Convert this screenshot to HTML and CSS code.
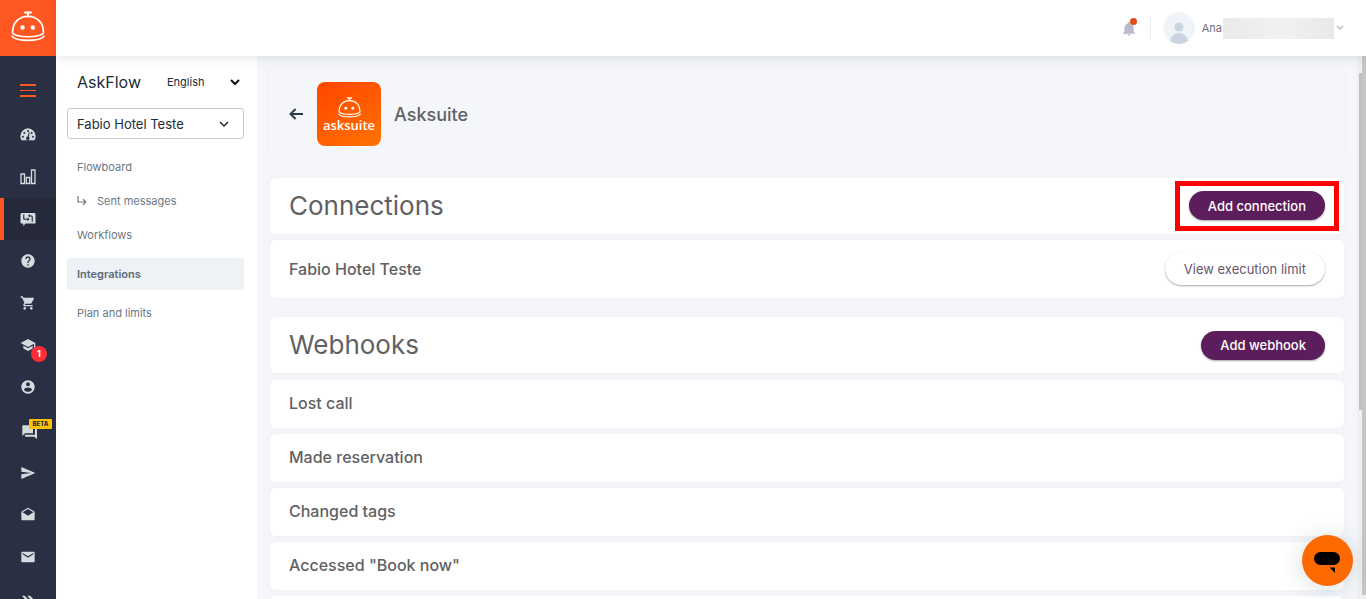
FILE: index.html
```html
<!DOCTYPE html>
<html lang="en">
<head>
<meta charset="utf-8">
<title>AskFlow</title>
<link rel="stylesheet" href="styles.css">
</head>
<body>
<svg class="defs" aria-hidden="true">
  <symbol id="bell-bot" viewBox="0 0 34 31">
    <g fill="none" stroke="#fff" stroke-width="1.7" stroke-linecap="round" stroke-linejoin="round">
      <path stroke-width="2" d="M14 1.500h6M17 1.500v3.500"/>
      <path d="M1.500 22C1.500 11.500 8 5.300 17 5.300S32.500 11.500 32.500 22C28 27 6 27 1.500 22z"/>
      <path d="M1 25.200c5 5.500 27 5.500 32 0"/>
    </g>
    <circle cx="11.500" cy="16.500" r="2.200" fill="#fff"/><circle cx="21.800" cy="16.500" r="2.200" fill="#fff"/>
  </symbol>
</svg>
<div class="app">
  <nav class="rail" aria-label="Main">
    <a class="brand" href="#" aria-label="Home"><svg width="34" height="31"><use href="#bell-bot"/></svg></a>
    <button class="burger" aria-label="Menu"><span></span><span></span><span></span></button>
    <a class="rail-item" href="#" aria-label="Dashboard"><svg width="16" height="16" viewBox="0 0 24 24"><path fill-rule="evenodd" d="M12 2A12 12 0 0 0 .500 14c0 2.200.600 4.200 1.600 6h19.800c1-1.800 1.600-3.800 1.600-6A12 12 0 0 0 12 2zm0 2.500a1.500 1.500 0 1 1 0 3 1.500 1.500 0 0 1 0-3zM4.500 13a1.500 1.500 0 1 1 0 3 1.500 1.500 0 0 1 0-3zm2-5.500a1.500 1.500 0 1 1 0 3 1.500 1.500 0 0 1 0-3zm13 5.500a1.500 1.500 0 1 1 0 3 1.500 1.500 0 0 1 0-3zM17.500 7.500a1.500 1.500 0 1 1 0 3 1.500 1.500 0 0 1 0-3zM13.200 8l1.300.400-1 6.600a2.600 2.600 0 1 1-1.800-.600z"/></svg></a>
    <a class="rail-item" href="#" aria-label="Reports"><svg width="16" height="16" viewBox="0 0 16 16"><path d="M1 5h3.500v9.500H1zM6.300 8.500h3.400v6H6.300zM11.500 1H15v13.500h-3.500z" fill="none" stroke="#d3dcdf" stroke-width="1.300"/></svg></a>
    <a class="rail-item active" href="#" aria-label="AskFlow"><svg width="16" height="16" viewBox="0 0 16 16"><path fill-rule="evenodd" d="M1.500 2h13l1 1v9.500h-10L3.500 15 3 12.500H1L.500 12V3zM3.200 3.500v3.800c0 1 .600 1.500 1.500 1.500h2.800v1.500l2-2-2-2v1.500H5c-.500 0-.700-.200-.700-.700V3.500zM8 4.800l2 1.800V5.500h1c.500 0 .700.300.700.700v4.500h1.100V6c0-1-.600-1.600-1.500-1.600H10V3z"/></svg></a>
    <a class="rail-item" href="#" aria-label="Help"><svg width="16" height="16" viewBox="0 0 24 24"><path d="M12 2C6.480 2 2 6.480 2 12s4.480 10 10 10 10-4.480 10-10S17.520 2 12 2zm1 17h-2v-2h2v2zm2.070-7.750l-.9.920C13.450 12.900 13 13.500 13 15h-2v-.5c0-1.100.450-2.100 1.170-2.830l1.240-1.260c.370-.360.590-.860.590-1.410 0-1.100-.9-2-2-2s-2 .9-2 2H8c0-2.210 1.790-4 4-4s4 1.790 4 4c0 .880-.360 1.680-.930 2.250z"/></svg></a>
    <a class="rail-item" href="#" aria-label="Store"><svg width="16" height="16" viewBox="0 0 24 24"><path d="M7 18c-1.100 0-1.990.9-1.990 2S5.900 22 7 22s2-.9 2-2-.9-2-2-2zM1 2v2h2l3.600 7.590-1.350 2.450c-.160.280-.250.610-.250.960 0 1.100.9 2 2 2h12v-2H7.420c-.140 0-.250-.110-.250-.250l.030-.120.900-1.630h7.450c.750 0 1.410-.410 1.750-1.030l3.580-6.490A1 1 0 0 0 20 4H5.210l-.940-2H1zm16 16c-1.100 0-1.990.9-1.990 2s.890 2 1.990 2 2-.9 2-2-.9-2-2-2z"/></svg></a>
    <a class="rail-item" href="#" aria-label="Academy, 1 new"><svg width="16" height="16" viewBox="0 0 24 24"><path d="M5 13.180v4L12 21l7-3.820v-4L12 17l-7-3.820zM12 3L1 9l11 6 9-4.910V17h2V9L12 3z"/></svg><span class="count">1</span></a>
    <a class="rail-item" href="#" aria-label="Account"><svg width="16" height="16" viewBox="0 0 24 24"><path d="M12 2C6.480 2 2 6.480 2 12s4.480 10 10 10 10-4.480 10-10S17.520 2 12 2zm0 3c1.660 0 3 1.340 3 3s-1.340 3-3 3-3-1.340-3-3 1.340-3 3-3zm0 14.200c-2.500 0-4.710-1.280-6-3.220.030-1.990 4-3.080 6-3.080 1.990 0 5.970 1.090 6 3.080-1.290 1.940-3.500 3.220-6 3.220z"/></svg></a>
    <a class="rail-item tall" href="#" aria-label="Chats, beta"><svg width="16" height="16" viewBox="0 0 24 24"><path d="M21 6h2c.550 0 1 .450 1 1v16l-4-4H7c-.550 0-1-.450-1-1v-2h15V6zm-3 7V3c0-.550-.450-1-1-1H3c-.550 0-1 .450-1 1v15l4-4h11c.550 0 1-.450 1-1z"/></svg><span class="beta">BETA</span></a>
    <a class="rail-item" href="#" aria-label="Send"><svg width="16" height="16" viewBox="0 0 24 24"><path d="M2.010 21L23 12 2.010 3 2 10l15 2-15 2z"/></svg></a>
    <a class="rail-item" href="#" aria-label="Read mail"><svg width="16" height="16" viewBox="0 0 24 24"><path d="M21.990 8c0-.720-.370-1.350-.940-1.700L12 1 2.950 6.300C2.380 6.650 2 7.280 2 8v10c0 1.100.9 2 2 2h16c1.100 0 2-.9 2-2l-.010-10zM12 13L3.740 7.840 12 3l8.260 4.840L12 13z"/></svg></a>
    <a class="rail-item" href="#" aria-label="Mail"><svg width="16" height="16" viewBox="0 0 24 24"><path d="M20 4H4c-1.100 0-2 .9-2 2v12c0 1.100.9 2 2 2h16c1.100 0 2-.9 2-2V6c0-1.100-.9-2-2-2zm0 4l-8 5-8-5V6l8 5 8-5v2z"/></svg></a>
    <a class="rail-item" href="#" aria-label="More"><svg width="16" height="16" viewBox="0 0 24 24"><path d="M3 7h4l6 6-6 6H3l5-6zM11 7h4l6 6-6 6h-4l5-6z"/></svg></a>
  </nav>

  <header class="topbar">
    <button class="alerts" aria-label="Notifications"><svg width="16" height="16" viewBox="0 0 24 24"><path fill="#b9bacb" d="M12 22c1.100 0 2-.9 2-2h-4c0 1.100.9 2 2 2zm7-6v-5c0-3.500-1.800-6-5-6.800V3.500a2 2 0 0 0-4 0v.700C6.800 5 5 7.500 5 11v5l-2 2v1h18v-1z"/></svg><span class="dot"></span></button>
    <button class="user">
      <svg class="avatar" width="32" height="32" viewBox="0 0 32 32"><circle cx="16" cy="16" r="16" fill="#f0f4f8"/><circle cx="16" cy="15" r="4.600" fill="#cbd5e2"/><path d="M6.800 29.100C8 24 11.500 21 16 21s8 3 9.200 8.100A16 16 0 0 1 6.800 29.100z" fill="#cbd5e2"/></svg>
      <span>Ana</span><span class="redacted"></span>
      <svg width="8" height="6" viewBox="0 0 8 6"><path d="M1 1l3 3 3-3" fill="none" stroke="#b9bacb" stroke-width="1.400"/></svg>
    </button>
  </header>

  <aside class="panel">
    <div class="panel-head">
      <h1>AskFlow</h1>
      <div class="pick language"><select aria-label="Language"><option>English</option></select><svg width="10" height="8" viewBox="0 0 10 8"><path d="M1 2l4 4 4-4" fill="none" stroke="#111" stroke-width="2"/></svg></div>
    </div>
    <div class="pick hotel"><select aria-label="Hotel"><option>Fabio Hotel Teste</option></select><svg width="10" height="8" viewBox="0 0 10 8"><path d="M1 2l4 4 4-4" fill="none" stroke="#212b36" stroke-width="1.500"/></svg></div>
    <nav class="links" aria-label="AskFlow">
      <a href="#">Flowboard</a>
      <a href="#"><svg width="10" height="10" viewBox="0 0 10 10"><path d="M1 0v6h7.500M6 3.200L8.700 6 6 8.800" fill="none" stroke="#6b7785" stroke-width="1.200"/></svg>Sent messages</a>
      <a href="#">Workflows</a>
      <a class="current" href="#">Integrations</a>
      <a href="#">Plan and limits</a>
    </nav>
  </aside>

  <main class="content">
    <section class="card intro">
      <button class="back" aria-label="Back"><svg width="14" height="12" viewBox="0 0 14 12"><path d="M14 6H1.800M6.600 1L1.500 6l5.100 5" fill="none" stroke="#2d3b4d" stroke-width="2"/></svg></button>
      <div class="logo"><svg width="23" height="21"><use href="#bell-bot"/></svg><span>asksuite</span></div>
      <h3>Asksuite</h3>
    </section>
    <section class="group">
      <div class="card head"><h2>Connections</h2><span class="marked"><button class="btn">Add connection</button></span></div>
      <div class="card row large"><span>Fabio Hotel Teste</span><button class="btn light">View execution limit</button></div>
    </section>
    <section class="group">
      <div class="card head"><h2>Webhooks</h2><button class="btn">Add webhook</button></div>
      <div class="rows">
        <div class="card row">Lost call</div>
        <div class="card row">Made reservation</div>
        <div class="card row">Changed tags</div>
        <div class="card row">Accessed "Book now"</div>
        <div class="card row"></div>
      </div>
    </section>
  </main>
  <div class="scroll inner"><span></span></div>
  <div class="scroll outer"><span></span></div>
  <button class="chat" aria-label="Open chat"><svg width="27" height="22" viewBox="0 0 27 22"><rect x="0" y="0" width="26" height="13" rx="6.500"/><path d="M15.500 15.500h5.500v5.500z"/></svg></button>
</div>
</body>
</html>
```
FILE: styles.css
```css
* { box-sizing: border-box; }
body { margin: 0; font-family: Inter, "Liberation Sans", sans-serif; color: #5f6164; }
h1, h2, h3 { margin: 0; font-weight: 400; }
button, select { font: inherit; color: inherit; border: 0; background: none; padding: 0; }
a { color: inherit; text-decoration: none; }
svg { display: block; flex: none; }
.defs { position: absolute; width: 0; height: 0; }

.app {
  display: grid;
  grid-template: 56px minmax(0, 1fr) / 56px 201px minmax(0, 1fr) 5px 4px;
  height: 100vh;
  overflow: hidden;
  background: #f4f6fa;
}

.rail { grid-row: 1 / 3; background: #2b2f43; overflow: hidden; display: flex; flex-direction: column; }
.brand { flex: none; height: 56px; background: #ff5722; display: flex; align-items: center; justify-content: center; padding-bottom: 4px; }
.burger { flex: none; height: 48px; margin-top: 10px; display: flex; flex-direction: column; align-items: center; justify-content: center; gap: 4px; }
.burger span { width: 16px; height: 2px; background: #ff5722; }
.burger span:nth-child(2) { height: 1px; }
.rail-item { flex: none; height: 42px; display: flex; align-items: center; justify-content: center; position: relative; fill: #d3dcdf; padding-right: 1px; }
.rail-item.tall { height: 44px; padding: 3px 0 0 1px; }
.rail-item.active { background: #252939; border-left: 4px solid #ff5722; padding-right: 5px; }
.count { position: absolute; left: 31px; top: 22px; width: 16px; height: 16px; border-radius: 50%; background: #ff2d37; color: #fff; font-size: 9px; font-weight: 700; line-height: 16px; text-align: center; }
.beta { position: absolute; left: 29px; top: 11px; width: 23px; height: 10px; border-radius: 1px; background: #ffc107; color: #2b2f43; font-size: 6px; font-weight: 800; line-height: 10px; text-align: center; }

.topbar { grid-column: 2 / 6; background: #fff; display: flex; align-items: center; justify-content: flex-end; padding-right: 22px; box-shadow: 0 2px 10px rgba(40, 45, 70, .13); z-index: 1; }
.alerts { position: relative; width: 30px; height: 22px; border-right: 1px solid #ebecf5; }
.alerts svg { margin-top: 2px; }
.dot { position: absolute; left: 9px; top: 1px; width: 7px; height: 7px; border-radius: 50%; background: #e64a19; }
.user { display: flex; align-items: center; margin-left: 12px; font-size: 11px; color: #6c7079; }
.avatar { margin-right: 7px; }
.redacted { width: 111px; height: 21px; margin: 0 2px 0 1px; background: linear-gradient(90deg, #eaeaea, #f1f1f1 50%, #e9e9e9); }

.panel { grid-row: 2; grid-column: 2; background: #fff; padding: 11px 13px 0 11px; }
.panel-head { display: flex; align-items: center; justify-content: space-between; height: 30px; padding: 0 4px 0 10px; }
h1 { font-size: 16px; color: #212b36; }
.pick { display: flex; align-items: center; color: #212b36; position: relative; }
.pick select { appearance: none; width: 100%; outline: 0; }
.pick svg { position: absolute; right: 0; pointer-events: none; }
.language { width: 73px; font-size: 11px; }
.hotel { height: 31px; margin-top: 11px; border: 1px solid #c5cad5; border-radius: 3px; font-size: 13px; }
.hotel select { height: 29px; padding-left: 9px; }
.hotel svg { right: 14px; }
.links { display: flex; flex-direction: column; margin-top: 12px; gap: 2px; font-size: 11px; color: #6b7785; }
.links a { height: 32px; display: flex; align-items: center; gap: 10px; padding: 0 10px; border-radius: 3px; }
.links .current { background: #eef1f6; font-weight: 600; margin: 5px 0; color: #5d6979; }

.content { grid-row: 2; grid-column: 3; padding: 13px 13px 0; overflow: hidden; display: flex; flex-direction: column; gap: 19px; }
.card { flex: none; border-radius: 6px; background: #fff; box-shadow: 0 0 6px rgba(60, 70, 110, .03); display: flex; align-items: center; justify-content: space-between; padding: 0 19px; }
.intro { height: 90px; background: #f5f6fa; justify-content: flex-start; }
.back { margin-right: 14px; }
.logo { width: 64px; height: 64px; margin-right: 13px; border-radius: 8px; background: linear-gradient(150deg, #ff4500, #ff7300); color: #fff; display: flex; flex-direction: column; align-items: center; justify-content: center; font: 600 13px/14px "Open Sans", sans-serif; }
h3 { font-size: 18px; font-weight: 500; }
.group { display: flex; flex-direction: column; gap: 6px; }
.head { height: 56px; }
h2 { font-size: 26px; line-height: 32px; }
.rows { display: flex; flex-direction: column; gap: 6px; margin-top: 1px; }
.row { height: 48px; padding-bottom: 3px; font-size: 16px; font-weight: 500; }
.row.large { height: 58px; padding-bottom: 1px; }
.marked { display: flex; margin: 0 -9px; padding: 5px 9px 6px; outline: 5px solid #f00; }
.btn { height: 29px; padding: 0 19px; border-radius: 17px; background: #5b1d5b; color: #fff; font-size: 13px; font-weight: 500; box-shadow: 0 1px 2px rgba(0, 0, 0, .35); }
.btn.light { height: 33px; background: #fff; color: #6a5570; font-weight: 400; }

.scroll { grid-row: 2; display: flex; flex-direction: column; background: #f0f0f0; }
.scroll span { background: #c1c1c1; }
.inner { grid-column: 4; padding: 17px 0 0 2px; }
.inner span { height: 64%; min-height: 40px; }
.outer { grid-column: 5; padding-bottom: 4px; }
.outer span { flex: 1; background: #c6c6c6; }

.chat { position: fixed; right: 13px; bottom: 13px; width: 51px; height: 51px; border-radius: 50%; background: #ff6a00; box-shadow: 0 2px 24px rgba(0, 50, 50, .16); display: flex; align-items: center; justify-content: center; padding-top: 4px; z-index: 2; }
```
